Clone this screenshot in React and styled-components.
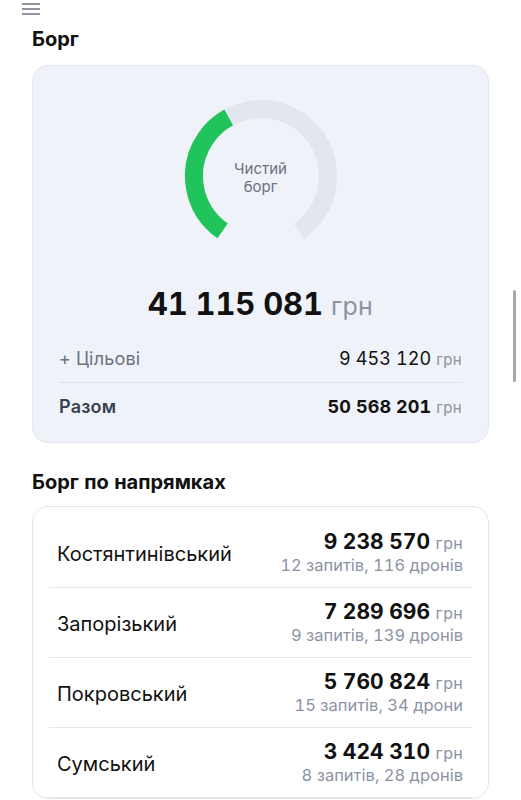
import React from 'react'
import styled, { createGlobalStyle } from 'styled-components'

const GlobalStyle = createGlobalStyle`
	* { box-sizing: border-box; }
	body {
		margin: 0;
		background: #ffffff;
		font-family: Inter, 'Noto Sans', 'Liberation Sans', sans-serif;
		color: #111111;
		overflow: hidden;
	}
`

const directions = [
	{ name: 'Костянтинівський', amount: '9 238 570', note: '12 запитів, 116 дронів' },
	{ name: 'Запорізький', amount: '7 289 696', note: '9 запитів, 139 дронів' },
	{ name: 'Покровський', amount: '5 760 824', note: '15 запитів, 34 дрони' },
	{ name: 'Сумський', amount: '3 424 310', note: '8 запитів, 28 дронів' },
]

// gauge geometry: 290° arc, gap at the bottom
const R = 67
const C = 2 * Math.PI * R
const ARC = (290 / 360) * C
const SHARE = 116 / 290

function Gauge() {
	return (
		<GaugeWrap>
			<svg width="160" height="160" viewBox="0 0 160 160">
				<g transform="rotate(125 80 80)">
					<circle cx="80" cy="80" r={R} fill="none" stroke="#e3e6ee" strokeWidth="18"
						strokeDasharray={`${ARC} ${C}`} />
					<circle cx="80" cy="80" r={R} fill="none" stroke="#21c45a" strokeWidth="18"
						strokeDasharray={`${ARC * SHARE} ${C}`} />
				</g>
			</svg>
			<GaugeLabel>Чистий<br />борг</GaugeLabel>
		</GaugeWrap>
	)
}

function App() {
	return (
		<Page>
			<GlobalStyle />
			<Menu>
				<svg width="18" height="12" viewBox="0 0 18 12">
					<path d="M0 1h18M0 6h18M0 11h18" stroke="#6b7280" strokeWidth="1.6" />
				</svg>
			</Menu>
			<SectionTitle>Борг</SectionTitle>
			<SummaryCard>
				<Gauge />
				<Total>
					41 115 081 <Currency size={25}>грн</Currency>
				</Total>
				<SumRow>
					<SumLabel>+ Цільові</SumLabel>
					<SumValue>9 453 120 <Currency size={15}>грн</Currency></SumValue>
				</SumRow>
				<SumRow strong>
					<SumLabel strong>Разом</SumLabel>
					<SumValue strong>50 568 201 <Currency size={15}>грн</Currency></SumValue>
				</SumRow>
			</SummaryCard>
			<SectionTitle second>Борг по напрямках</SectionTitle>
			<ListCard>
				{directions.map((d) => (
					<Row key={d.name}>
						<RowName>{d.name}</RowName>
						<RowRight>
							<RowAmount>{d.amount} <Currency size={16}>грн</Currency></RowAmount>
							<RowNote>{d.note}</RowNote>
						</RowRight>
					</Row>
				))}
			</ListCard>
			<ScrollThumb />
		</Page>
	)
}

const Page = styled.div`
	width: 521px;
	height: 800px;
	padding: 0 32px;
	overflow: hidden;
	font-variant-numeric: tabular-nums;
`

const Menu = styled.div`
	height: 24px;
	margin-left: -10px;
	display: flex;
	align-items: center;
	padding-bottom: 6px;
	svg { display: block; }
`

const SectionTitle = styled.h2`
	margin: ${(p) => (p.second ? '27px 0 12px' : '3px 0 14px')};
	font-size: 20px;
	font-weight: 700;
	line-height: 24px;
	color: #111;
`

const SummaryCard = styled.div`
	background: #eff2f8;
	border: 1px solid #e2e6ee;
	border-radius: 16px;
	padding: 30px 26px 12px 26px;
	display: flex;
	flex-direction: column;
`

const GaugeWrap = styled.div`
	position: relative;
	width: 160px;
	height: 160px;
	align-self: center;
	svg { display: block; }
`

const GaugeLabel = styled.div`
	position: absolute;
	inset: 0;
	display: flex;
	align-items: center;
	justify-content: center;
	text-align: center;
	font-size: 15px;
	line-height: 18px;
	color: #6b7280;
	padding-top: 3px;
`

const Total = styled.div`
	margin-top: 30px;
	text-align: center;
	font-size: 31px;
	font-weight: 700;
	line-height: 36px;
	color: #111;
	letter-spacing: -0.2px;
	margin-bottom: 10px;
`

const Currency = styled.span`
	font-size: ${(p) => p.size}px;
	font-weight: 400;
	color: #8b93a3;
	letter-spacing: 0.3px;
`

const SumRow = styled.div`
	display: flex;
	justify-content: space-between;
	align-items: center;
	height: 48px;
	border-top: ${(p) => (p.strong ? '1px solid #dde1e9' : 'none')};
`

const SumLabel = styled.span`
	font-size: 18px;
	color: ${(p) => (p.strong ? '#374151' : '#6b7280')};
	font-weight: ${(p) => (p.strong ? 600 : 400)};
	letter-spacing: 0.2px;
`

const SumValue = styled.span`
	font-size: 18px;
	color: #111;
	font-weight: ${(p) => (p.strong ? 700 : 400)};
	letter-spacing: 0.1px;
`

const ListCard = styled.div`
	background: #ffffff;
	border: 1px solid #e4e6eb;
	border-radius: 16px;
	padding: 11px 16px 0;
`

const Row = styled.div`
	display: flex;
	align-items: center;
	justify-content: space-between;
	height: 70px;
	padding: 0 9px 0 8px;
	border-bottom: 1px solid #e5e7eb;
`

const RowName = styled.span`
	font-size: 20px;
	color: #111;
	padding-top: 2px;
`

const RowRight = styled.div`
	display: flex;
	flex-direction: column;
	align-items: flex-end;
`

const RowAmount = styled.span`
	font-size: 21px;
	font-weight: 700;
	line-height: 23px;
	color: #111;
`

const RowNote = styled.span`
	font-size: 16.5px;
	line-height: 21px;
	color: #8b93a3;
`

const ScrollThumb = styled.div`
	position: fixed;
	left: 513px;
	top: 290px;
	width: 3px;
	height: 92px;
	border-radius: 2px;
	background: #a8a8a8;
`

export default App
